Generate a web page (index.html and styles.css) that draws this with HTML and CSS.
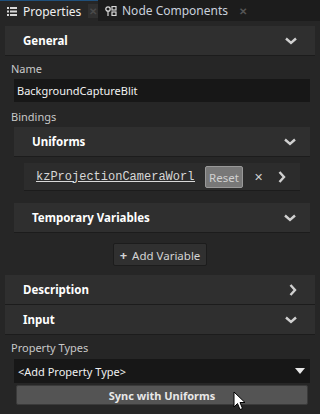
FILE: index.html
```html
<!DOCTYPE html>
<html lang="en">
<head>
  <meta charset="UTF-8" />
  <title>Properties</title>
  <link rel="stylesheet" href="styles.css">
</head>
<body>

<div class="tabs">
  <div class="tab active">
    <svg class="tab-icon" width="10" height="9" viewBox="0 0 10 9">
      <rect x="0" y="0" width="2" height="2" fill="#d8d8d8"/>
      <rect x="3" y="0" width="7" height="2" fill="#d8d8d8"/>
      <rect x="0" y="3.5" width="2" height="2" fill="#d8d8d8"/>
      <rect x="3" y="3.5" width="7" height="2" fill="#d8d8d8"/>
      <rect x="0" y="7" width="2" height="2" fill="#d8d8d8"/>
      <rect x="3" y="7" width="7" height="2" fill="#d8d8d8"/>
    </svg>
    <span>Properties</span>
    <span class="close dark">✕</span>
  </div>
  <div class="tab">
    <svg class="tab-icon" width="12" height="10" viewBox="0 0 12 10">
      <circle cx="3" cy="3" r="2.2" fill="none" stroke="#d8d8d8" stroke-width="1.3"/>
      <rect x="2.4" y="5" width="1.2" height="5" fill="#d8d8d8"/>
      <rect x="7" y="0.5" width="4" height="3.5" fill="none" stroke="#d8d8d8" stroke-width="1.2"/>
      <rect x="7" y="6" width="4" height="3.5" fill="none" stroke="#d8d8d8" stroke-width="1.2"/>
    </svg>
    <span>Node Components</span>
    <span class="close">✕</span>
  </div>
</div>

<div class="panel">
  <div class="header">
    <span>General</span>
    <svg class="chev" width="12" height="8" viewBox="0 0 12 8"><path d="M1 1.5 L6 6 L11 1.5" fill="none" stroke="#d0d0d0" stroke-width="2.4"/></svg>
  </div>

  <div class="label">Name</div>
  <div class="text-input">BackgroundCaptureBlit</div>

  <div class="label">Bindings</div>
  <div class="header sub">
    <span>Uniforms</span>
    <svg class="chev" width="12" height="8" viewBox="0 0 12 8"><path d="M1 1.5 L6 6 L11 1.5" fill="none" stroke="#d0d0d0" stroke-width="2.4"/></svg>
  </div>
  <div class="uniform-row">
    <span class="uniform-name">kzProjectionCameraWorldMatrix</span>
    <span class="reset">Reset</span>
    <span class="remove">✕</span>
    <svg class="go" width="8" height="12" viewBox="0 0 8 12"><path d="M1.5 1 L6 6 L1.5 11" fill="none" stroke="#d0d0d0" stroke-width="2.4"/></svg>
  </div>

  <div class="header sub temp">
    <span>Temporary Variables</span>
    <svg class="chev" width="12" height="8" viewBox="0 0 12 8"><path d="M1 1.5 L6 6 L11 1.5" fill="none" stroke="#d0d0d0" stroke-width="2.4"/></svg>
  </div>
  <div class="add-row">
    <div class="add-btn"><span class="plus">+</span> Add Variable</div>
  </div>

  <div class="header">
    <span>Description</span>
    <svg class="chev" width="8" height="12" viewBox="0 0 8 12"><path d="M1.5 1 L6 6 L1.5 11" fill="none" stroke="#d0d0d0" stroke-width="2.4"/></svg>
  </div>
  <div class="header">
    <span>Input</span>
    <svg class="chev" width="12" height="8" viewBox="0 0 12 8"><path d="M1 1.5 L6 6 L11 1.5" fill="none" stroke="#d0d0d0" stroke-width="2.4"/></svg>
  </div>

  <div class="label">Property Types</div>
  <div class="select">
    <span>&lt;Add Property Type&gt;</span>
    <svg width="10" height="6" viewBox="0 0 10 6"><path d="M0 0 L10 0 L5 6 Z" fill="#e8e8e8"/></svg>
  </div>
  <div class="sync">Sync with Uniforms</div>
</div>

<svg class="cursor" width="14" height="20" viewBox="0 0 14 20">
  <path d="M1 1 L1 16 L4.5 12.5 L7 18.5 L9.5 17.5 L7 11.5 L12 11.5 Z" fill="#ffffff" stroke="#000000" stroke-width="1"/>
</svg>

</body>
</html>
```

FILE: styles.css
```css
body {
  margin: 0;
  background: #262626;
  color: #d4d4d4;
  font-family: 'Noto Sans', sans-serif;
  font-size: 11px;
  width: 320px;
  height: 414px;
  overflow: hidden;
  position: relative;
}

.tabs {
  display: flex;
  height: 21px;
  background: #1c1c1c;
}

.tab {
  display: flex;
  align-items: center;
  padding: 0 0 0 7px;
  color: #c9d0dc;
  font-size: 12px;
  white-space: nowrap;
}

.tab.active {
  background: #262626;
  width: 98px;
  flex-shrink: 0;
  color: #f0f0f0;
  border-top: 1px solid #1f4f7a;
  box-sizing: border-box;
}

.tab-icon {
  flex-shrink: 0;
  margin-right: 6px;
}

.tab + .tab .tab-icon {
  margin-right: 5px;
}

.close {
  margin-left: 11px;
  color: #555;
  font-size: 10px;
  font-weight: bold;
}

.close.dark {
  background: #303030;
  color: #4a4a4a;
  padding: 0 1px;
  margin-left: 7px;
}

.panel {
  padding: 5px 5px 0 5px;
}

.header {
  display: flex;
  align-items: center;
  justify-content: space-between;
  height: 30px;
  background: #2f2f2f;
  border-bottom: 1px solid #1c1c1c;
  padding: 0 18px 0 18px;
  font-weight: bold;
  color: #ffffff;
  font-size: 11.5px;
  box-sizing: border-box;
}

.header.sub {
  margin: 0 5px 0 9px;
  padding-left: 18px;
  padding-right: 14px;
}

.header.temp {
  margin-top: 12px;
}

.label {
  padding-left: 6px;
  margin-top: 5px;
  height: 15px;
  line-height: 15px;
  color: #c8c8c8;
}

.text-input {
  margin: 3px 5px 0 9px;
  height: 23px;
  line-height: 23px;
  background: #171717;
  padding-left: 3px;
  color: #f2f2f2;
  margin-bottom: 7px;
}

.label + .header.sub {
  margin-top: 3px;
}

.uniform-row {
  display: flex;
  align-items: center;
  margin: 6px 15px 0 19px;
  height: 28px;
  background: #2c2c2c;
  border-bottom: 1px solid #1c1c1c;
  box-sizing: border-box;
}

.uniform-name {
  font-family: 'Liberation Mono', monospace;
  font-size: 12px;
  color: #d8d8d8;
  text-decoration: underline;
  width: 159px;
  overflow: hidden;
  white-space: nowrap;
  margin-left: 12px;
}

.reset {
  margin-left: 10px;
  background: #787878;
  color: #d0d0d0;
  border: 1px solid #999;
  border-radius: 2px;
  height: 22px;
  line-height: 21px;
  padding: 0 3px;
  box-sizing: border-box;
  font-size: 11.5px;
}

.remove {
  margin-left: 11px;
  color: #cfcfcf;
  font-size: 11px;
}

.go {
  margin-left: 15px;
}

.add-row {
  display: flex;
  justify-content: center;
  margin-top: 10px;
  margin-bottom: 9px;
}

.add-btn {
  background: #303030;
  border: 1px solid #1c1c1c;
  border-radius: 2px;
  width: 94px;
  height: 23px;
  line-height: 22px;
  text-align: center;
  box-sizing: border-box;
  color: #d4d4d4;
  font-size: 11.5px;
}

.plus {
  font-weight: bold;
  font-size: 13px;
  margin-right: 2px;
}

.label + .select {
  margin-top: 4px;
}

.select {
  display: flex;
  align-items: center;
  justify-content: space-between;
  margin: 0 5px 0 9px;
  height: 24px;
  background: #171717;
  padding: 0 5px 0 4px;
  color: #f0f0f0;
}

.sync {
  margin: 2px 7px 0 11px;
  height: 20px;
  line-height: 19px;
  background: #545454;
  border: 1px solid #3a3a3a;
  border-radius: 2px;
  text-align: center;
  font-weight: bold;
  color: #e8e8e8;
  box-sizing: border-box;
}

.cursor {
  position: absolute;
  left: 233px;
  top: 391px;
}
```
